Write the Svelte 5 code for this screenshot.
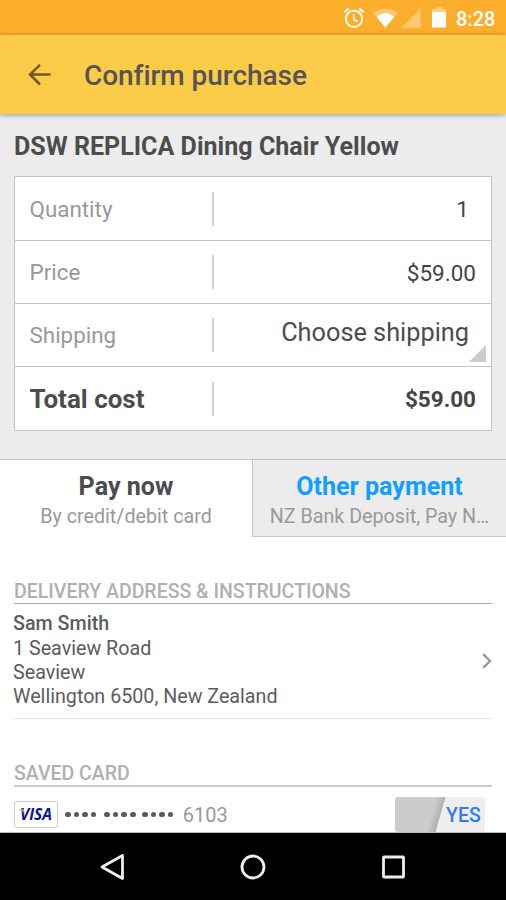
<script>
let quantity = 1;
let price = 59;
let shipping = 'Choose shipping';
let selectedTab = 'now';
let useSavedCard = true;

const address = ['1 Seaview Road', 'Seaview', 'Wellington 6500, New Zealand'];
const cardGroups = [4, 4, 4];

$: total = '$' + (price * quantity).toFixed(2);
</script>

<div class="screen">
	<div class="status-bar">
		<svg class="alarm" width="22" height="22" viewBox="0 0 22 22" fill="none" stroke="#fff" stroke-width="1.9">
			<circle cx="11" cy="11.8" r="8.2" />
			<path d="M1.4 5.2 5.7 1.6M20.6 5.2 16.3 1.6" stroke-width="2.2" />
			<path d="M10.7 7v5.3l4 2.4" stroke-width="1.6" />
		</svg>
		<svg class="wifi" width="25" height="20" viewBox="0 0 25 20">
			<path d="M.3 5C3.5 2.1 7.5.4 12.4.4S21.4 2.1 24.6 5L12.4 19.5z" fill="#fff" opacity=".33" />
			<path d="M3.6 8.9C5.8 6.9 8.7 5.2 12.4 5.2s6.6 1.7 8.8 3.7L12.4 19.5z" fill="#fff" />
		</svg>
		<svg class="signal" width="20" height="20" viewBox="0 0 20 20">
			<path d="M19.7.2v19.5H.2z" fill="#fff" opacity=".33" />
		</svg>
		<svg class="battery" width="14" height="21" viewBox="0 0 14 21">
			<path d="M0 5V2h4V0h6v2h4v3z" fill="#fff" opacity=".4" />
			<path d="M0 5h14v14.5a1 1 0 0 1-1 1H1a1 1 0 0 1-1-1z" fill="#fff" />
		</svg>
		<span class="clock">8:28</span>
	</div>

	<header class="toolbar">
		<svg width="24" height="22" viewBox="0 0 24 22" fill="none" stroke="#6e5a20" stroke-width="2.5">
			<path d="M22.5 10.5H2M12 .9 2 10.5l10 10" />
		</svg>
		<h1>Confirm purchase</h1>
	</header>

	<section class="summary">
		<h2>DSW REPLICA Dining Chair Yellow</h2>
		<div class="table">
			<div class="row">
				<span class="label">Quantity</span>
				<span class="value inset">{quantity}</span>
			</div>
			<div class="row">
				<span class="label">Price</span>
				<span class="value">${price.toFixed(2)}</span>
			</div>
			<div class="row">
				<span class="label">Shipping</span>
				<span class="value select">{shipping}</span>
				<svg class="corner" width="17" height="17" viewBox="0 0 17 17"><path d="M17 0v17H0z" fill="#cbcbcb" /></svg>
			</div>
			<div class="row total">
				<span class="label">Total cost</span>
				<span class="value">{total}</span>
			</div>
		</div>
	</section>

	<div class="tabs">
		<div class="tab" class:active={selectedTab === 'now'}>
			<strong>Pay now</strong>
			<span>By credit/debit card</span>
		</div>
		<div class="tab" class:active={selectedTab === 'other'}>
			<strong>Other payment</strong>
			<span>NZ Bank Deposit, Pay N…</span>
		</div>
	</div>

	<main>
		<h3>DELIVERY ADDRESS &amp; INSTRUCTIONS</h3>
		<div class="address">
			<div class="lines">
				<strong>Sam Smith</strong>
				{#each address as line}
					<span>{line}</span>
				{/each}
			</div>
			<svg width="10" height="16" viewBox="0 0 10 16" fill="none" stroke="#999" stroke-width="2.4">
				<path d="M1.2 1.2 8 8l-6.8 6.8" />
			</svg>
		</div>

		<h3 class="saved">SAVED CARD</h3>
		<div class="card">
			<div class="visa">
				<svg width="36" height="23" viewBox="0 0 36 23">
					<text x="2" y="17" textLength="32" lengthAdjust="spacingAndGlyphs">VISA</text>
					<path d="M1 6h4.3l1.4 5C5.5 8.6 4 7.300 1 6.500z" fill="#f7981d" />
				</svg>
			</div>
			<div class="dots">
				{#each cardGroups as count}
					<div class="group">
						{#each Array(count) as _}
							<i></i>
						{/each}
					</div>
				{/each}
			</div>
			<span class="digits">6103</span>
			<div class="toggle">
				<svg width="51" height="35" viewBox="0 0 51 35">
					<defs>
						<linearGradient id="edge" gradientUnits="userSpaceOnUse" x1="37" y1="15" x2="45.5" y2="17.5">
							<stop offset="0" stop-color="#ccc" />
							<stop offset="1" stop-color="#b0b0b0" />
						</linearGradient>
					</defs>
					<path d="M0 0h50.5L40.5 35H0z" fill="url(#edge)" />
				</svg>
				<span>{useSavedCard ? 'YES' : 'NO'}</span>
			</div>
		</div>
	</main>

	<nav>
		<svg width="26" height="28" viewBox="0 0 26 28"><path d="M22.5 2.5v23L2 14z" /></svg>
		<svg width="26" height="28" viewBox="0 0 26 28"><circle cx="13" cy="14" r="11" /></svg>
		<svg width="26" height="28" viewBox="0 0 26 28"><rect x="2.5" y="4" width="20" height="20" rx=".5" /></svg>
	</nav>
</div>

<style>
:global(body) {
	margin: 0;
	background: #fff;
}
.screen {
	width: 506px;
	height: 900px;
	display: flex;
	flex-direction: column;
	overflow: hidden;
	background: #fff;
	font-family: Roboto, sans-serif;
	color: #4c4c4c;
}
svg {
	display: block;
	flex: none;
}
h1, h2, h3 {
	margin: 0;
	font-weight: 500;
	white-space: nowrap;
}
.status-bar {
	height: 35px;
	flex: none;
	display: flex;
	align-items: center;
	justify-content: flex-end;
	box-sizing: border-box;
	padding-right: 11px;
	background: #fbae2c;
}
.wifi {
	margin-left: 8px;
}
.signal {
	margin-left: 3px;
}
.battery {
	margin-left: 11px;
}
.clock {
	width: 39px;
	margin: 2px 0 0 10px;
	color: #fff;
	font-size: 20px;
	font-weight: 500;
	line-height: 24px;
}
.toolbar {
	height: 79px;
	flex: none;
	display: flex;
	align-items: center;
	box-sizing: border-box;
	padding: 0 0 0 27.5px;
	background: #fccc48;
	box-shadow: 0 1px 5px rgba(0, 0, 0, 0.35);
	z-index: 1;
}
h1 {
	margin: 2px 0 0 32.5px;
	font-size: 28px;
	letter-spacing: -0.05px;
	color: #555;
}
.summary {
	height: 345px;
	flex: none;
	box-sizing: border-box;
	padding: 17px 14px 0;
	background: #ececec;
}
h2 {
	height: 45px;
	font-size: 25px;
	font-weight: 700;
	letter-spacing: 0.04px;
	line-height: 31px;
}
.table {
	height: 255px;
	box-sizing: border-box;
	display: grid;
	grid-template-rows: 64px repeat(3, 63px);
	border: 1px solid #c4c4c4;
	background: #fff;
}
.row {
	position: relative;
	display: flex;
	align-items: center;
	padding: 0 15px 0 14.5px;
	border-bottom: 1px solid #c4c4c4;
}
.row:last-child {
	border-bottom: 0;
}
.label {
	width: 182px;
	height: 34px;
	border-right: 2px solid #d2d2d2;
	font-size: 22.4px;
	line-height: 34px;
	color: #999;
}
.value {
	flex: 1;
	padding-top: 1px;
	text-align: right;
	font-size: 22.5px;
	line-height: 34px;
	color: #444;
}
.inset {
	padding-right: 7px;
}
.select {
	padding: 0 7px 5px 0;
	font-size: 25.3px;
	color: #4c4c4c;
}
.corner {
	position: absolute;
	right: 5px;
	bottom: 4px;
}
.total .label {
	font-size: 26px;
	font-weight: 700;
	color: #4c4c4c;
}
.total .value {
	font-weight: 700;
}
.tabs {
	height: 78px;
	flex: none;
	display: grid;
	grid-template-columns: 252px 254px;
	box-sizing: border-box;
	border-top: 1px solid #bdbdbd;
}
.tab {
	display: flex;
	flex-direction: column;
	align-items: center;
	box-sizing: border-box;
	padding-top: 11px;
	background: #ececec;
	border-left: 1px solid #c4c4c4;
	border-bottom: 1px solid #c9c9c9;
	white-space: nowrap;
}
.tab.active {
	padding-right: 1px;
	background: #fff;
	border-color: transparent;
}
.tab strong {
	font-size: 25.1px;
	font-weight: 700;
	line-height: 31px;
	color: #129eff;
}
.tab.active strong {
	color: #4c4c4c;
}
.tab span {
	font-size: 19.7px;
	line-height: 30px;
	color: #999;
}
main {
	height: 296px;
	flex: none;
	overflow: hidden;
	box-sizing: border-box;
	padding: 41px 14px 0;
	border-bottom: 1px solid #bbb;
}
h3 {
	height: 25px;
	font-size: 19.5px;
	line-height: 27px;
	color: #b0b0b0;
	border-bottom: 1px solid #aaa;
}
.address {
	height: 114px;
	display: flex;
	align-items: center;
	justify-content: space-between;
	border-bottom: 1px solid #e5e5e5;
}
.lines {
	display: flex;
	flex-direction: column;
	margin: 0 0 0 -1px;
	font-size: 19.7px;
	line-height: 24.4px;
	color: #5c5c5c;
}
.lines strong {
	font-weight: 500;
}
.saved {
	margin-top: 41px;
	border-bottom: 2px solid #ccc;
}
.card {
	display: flex;
	align-items: center;
	height: 55px;
}
.visa {
	width: 42px;
	height: 25px;
	display: flex;
	align-items: center;
	justify-content: center;
	border: 1px solid #ccc;
	border-radius: 2px;
}
.visa text {
	font: italic 700 15.5px 'Open Sans', sans-serif;
	fill: #0d1494;
}
.dots {
	display: flex;
	gap: 6.5px;
	margin-left: 7px;
}
.group {
	display: flex;
	gap: 3.1px;
}
.group:first-child {
	margin-right: 1.5px;
}
.dots i {
	width: 5.5px;
	height: 5.5px;
	border-radius: 50%;
	background: #5a5a5a;
}
.digits {
	margin: 1px 0 0 9.5px;
	font-size: 19.9px;
	color: #999;
}
.toggle {
	width: 90px;
	height: 35px;
	display: flex;
	align-items: center;
	margin: 0 7px 0 auto;
	border-radius: 3px;
	overflow: hidden;
	background: #eee;
}
.toggle span {
	padding-top: 1px;
	font-size: 19.5px;
	font-weight: 500;
	color: #2f7cf6;
}
nav {
	flex: 1;
	display: flex;
	align-items: center;
	justify-content: center;
	gap: 114.5px;
	background: #000;
}
nav svg {
	fill: none;
	stroke: #eee;
	stroke-width: 2.8;
	stroke-linejoin: round;
}
</style>
